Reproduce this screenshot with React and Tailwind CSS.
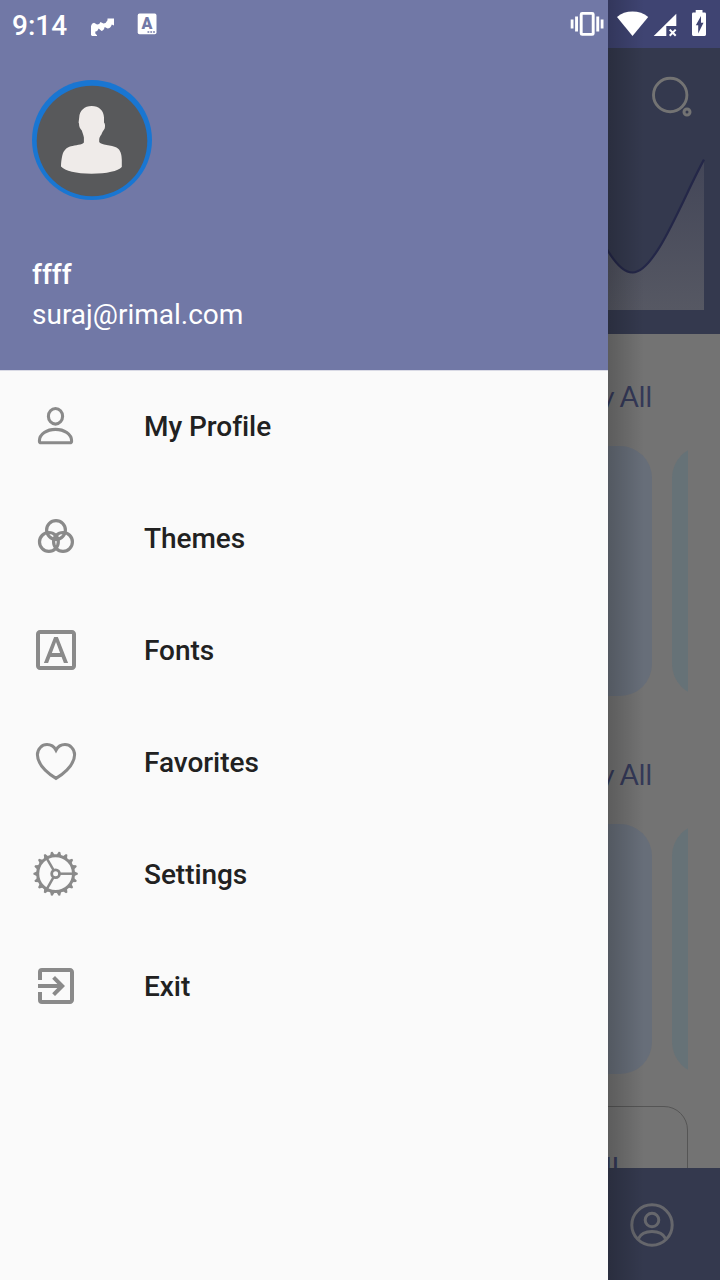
import React from "react";
import { MdOutlineFontDownload, MdExitToApp } from "react-icons/md";

const teeth = Array.from({ length: 18 }, (_, i) => i * 20);

function ProfileIcon() {
  return (
    <svg className="size-12" viewBox="0 0 48 48" fill="none" stroke="currentColor" strokeWidth="3.1">
      <ellipse cx="23.5" cy="14.3" rx="7.1" ry="7.8" />
      <path d="M7.4 39C7.4 32 15 27.4 23.5 27.4S39.6 32 39.6 39Q39.6 40.8 37.8 40.8H9.2Q7.4 40.8 7.4 39Z" />
    </svg>
  );
}

function ThemesIcon() {
  return (
    <svg className="size-12" viewBox="0 0 48 48" fill="none" stroke="currentColor" strokeWidth="3.2">
      <circle cx="24" cy="16" r="9.4" />
      <circle cx="16.9" cy="27.9" r="9.4" />
      <circle cx="31" cy="27.9" r="9.4" />
    </svg>
  );
}

function HeartIcon() {
  return (
    <svg className="size-12" viewBox="0 0 48 48" fill="none" stroke="currentColor" strokeWidth="3">
      <path d="M24 40.4C20 38 5.4 28.5 5.4 16.8C5.4 10.8 10 6.6 15 6.6C19.4 6.6 22.3 9 24 12.2C25.7 9 28.6 6.6 33 6.6C38 6.6 42.6 10.8 42.6 16.8C42.6 28.5 28 38 24 40.4Z" />
    </svg>
  );
}

function GearIcon() {
  return (
    <svg className="size-12" viewBox="0 0 48 48" fill="none" stroke="currentColor">
      <circle cx="23.6" cy="23.7" r="17.9" strokeWidth="3" />
      <circle cx="23.6" cy="23.7" r="3.9" strokeWidth="2.8" />
      {[0, 120, 240].map((a) => (
        <path key={a} d="M27.6 23.7H41" strokeWidth="2.5" transform={`rotate(${a} 23.6 23.7)`} />
      ))}
      {teeth.map((a) => (
        <path key={a} d="M42 21.2L45.8 22.9L45.8 24.5L42 26.2Z" fill="currentColor" stroke="none" transform={`rotate(${a} 23.6 23.7)`} />
      ))}
    </svg>
  );
}

const items = [
  ["My Profile", <ProfileIcon />],
  ["Themes", <ThemesIcon />],
  ["Fonts", <MdOutlineFontDownload className="size-12" />],
  ["Favorites", <HeartIcon />],
  ["Settings", <GearIcon />],
  ["Exit", <MdExitToApp className="size-12" />],
];

function Avatar() {
  return (
    <svg className="size-[120px]" viewBox="0 0 120 120">
      <circle cx="60" cy="60" r="60" fill="#1976d2" />
      <circle cx="60" cy="61" r="55.3" fill="#58595b" />
      <path
        fill="#efebe9"
        d="M59.7 26C67 26 71.8 30.5 72 37.5V42.5C73.4 44 73.2 47 72.6 48.8C71.5 50.3 70.3 52 69.4 54.5C68.4 56 67.3 57 67.2 59.5V62C68.5 65 80 65 84.5 67.5C88.5 69.5 89.8 74.5 89.8 80V87C86 91 75 93.7 59.5 93.7C44 93.7 33 91 29 86.5C29 83 29.5 79 30.3 75.5C31.5 70.5 34.5 67.5 39 66.3C43 65.2 50.5 64.8 51.9 62.5V57.5C51.5 55 50.5 53 49.8 50.5C48 48.5 47 47 47 43.5L46.6 42.5L47.2 37.5C47.5 30.5 52.5 26 59.7 26Z"
      />
    </svg>
  );
}

function StatusBar() {
  return (
    <div className="absolute inset-x-0 top-0 flex h-12 items-center justify-between text-white">
      <div className="flex items-center pl-3">
        <span className="w-[78px] pt-[3px] text-[28px] leading-none font-medium">9:14</span>
        <svg className="h-12 w-[26px]" viewBox="90 0 26 48" fill="currentColor">
          <path d="M91 35V26Q91.6 23 94 22.8L97 24.5Q99.5 24.6 100.5 22L103.5 23.6Q106 23.4 107.5 20.2V18.4H114V25.4L111.8 24.6Q110.6 28.4 107.6 28.6L104.7 27Q104 30.4 101.5 30.9L98.7 28.6Q97.6 31.6 95.3 31.4V33.4L97 35.3V36H92Z" />
        </svg>
        <svg className="ml-5 h-12 w-6" viewBox="136 0 24 48">
          <rect x="137.7" y="13.6" width="18.8" height="20.6" rx="1.8" fill="#fff" />
          <text x="147" y="29" fontSize="16" fontWeight="900" textAnchor="middle" fill="#7178a6">A</text>
          <path d="M147.5 32H155" stroke="#7178a6" strokeWidth="1.7" strokeDasharray="1.8 1" />
        </svg>
      </div>
      <svg className="h-12 w-[152px]" viewBox="568 0 152 48" fill="currentColor">
        <rect x="581.2" y="13.4" width="12" height="21" rx="1" fill="none" stroke="currentColor" strokeWidth="2.9" />
        <path d="M570.7 19.5H573.5V28.6H570.7ZM575.1 16.6H578V31.4H575.1ZM596.3 16.6H599.2V31.4H596.3ZM600.7 19.5H603.5V28.6H600.7Z" />
        <path d="M632.5 36L617 17Q623.5 11.6 632.5 11.6T648.2 17Z" />
        <path d="M653.7 36L676.3 13.7V26H666.3V36Z" />
        <path d="M669.7 29.6L675.7 35.8M675.7 29.6L669.7 35.8" stroke="currentColor" strokeWidth="2" />
        <path fillRule="evenodd" d="M695.7 10H702.5V12.6H704.7Q706 12.6 706 14V34.6Q706 36 704.7 36H693.3Q692 36 692 34.6V14Q692 12.6 693.3 12.6H695.7ZM701 16L695.8 25.3H698.2V33.5L703.5 22.8H701Z" />
      </svg>
    </div>
  );
}

function Section() {
  return (
    <section className="flex flex-col pr-8">
      <div className="flex h-[112px] items-center justify-end pt-3 pr-9 text-[28px] text-[#343958] [font-family:Lato,sans-serif]">
        y All
      </div>
      <div className="flex h-[250px] justify-end gap-5 overflow-hidden">
        <div className="w-[250px] shrink-0 rounded-[32px] bg-[#676e79]" />
        <div className="w-4 shrink-0 overflow-hidden">
          <div className="h-full w-[250px] rounded-[32px] bg-[#667277]" />
        </div>
      </div>
    </section>
  );
}

function HomePage() {
  return (
    <div className="flex h-full flex-col bg-[#737373]">
      <div className="h-12 shrink-0 bg-[#3f4472]" />
      <header className="h-[286px] shrink-0 bg-[#34394e]">
        <div className="flex h-[110px] justify-end pt-6 pr-6">
          <svg className="size-12" viewBox="648 72 48 48" fill="none" stroke="#737373">
            <circle cx="670.2" cy="95" r="16.7" strokeWidth="2.9" />
            <circle cx="687" cy="112" r="3" strokeWidth="3" />
          </svg>
        </div>
        <svg className="h-[152px] w-full" viewBox="0 158 720 152" fill="none">
          <defs>
            <linearGradient id="area" x1="0" y1="159" x2="0" y2="310" gradientUnits="userSpaceOnUse">
              <stop stopColor="#434658" />
              <stop offset="1" stopColor="#565863" />
            </linearGradient>
          </defs>
          <path d="M580 196C598 232 614 272.5 632.5 272.5C656 272.5 684 195 704 159V310H580Z" fill="url(#area)" />
          <path d="M580 196C598 232 614 272.5 632.5 272.5C656 272.5 684 195 704 159.6" stroke="#242748" strokeWidth="2.2" />
        </svg>
      </header>
      <main className="flex min-h-0 flex-1 flex-col gap-4 overflow-hidden">
        <Section />
        <Section />
        <div className="mt-4 mr-8 h-40 shrink-0 rounded-[24px] border border-[#555] pt-[42px] pr-[68px] text-right text-[30px] leading-10 text-[#343958]">
          ll
        </div>
      </main>
      <nav className="flex h-28 shrink-0 items-center justify-end bg-[#34394e] pt-[2px] pr-11">
        <svg className="size-12" viewBox="0 0 48 48" fill="none" stroke="#66676c" strokeWidth="3">
          <circle cx="24" cy="24" r="20.2" />
          <circle cx="24" cy="19" r="6.8" />
          <path d="M10.5 37.5C15 28.3 33 28.3 37.5 37.5" />
        </svg>
      </nav>
    </div>
  );
}

function Drawer() {
  return (
    <div className="absolute inset-y-0 left-0 flex">
      <aside className="flex w-[608px] flex-col bg-[#fafafa]">
        <div className="flex h-[371px] flex-col border-b border-[#d9dae5] bg-[#7178a6] px-8 pt-20 text-[28px] text-white">
          <Avatar />
          <div className="mt-[55px] leading-10 font-medium">ffff</div>
          <div className="leading-10">suraj@rimal.com</div>
        </div>
        <ul className="-mt-px flex flex-col">
          {items.map(([label, icon]) => (
            <li key={label} className="flex h-28 items-center gap-16 px-8">
              <span className="text-[#8a8a8a]">{icon}</span>
              <span className="pt-0.5 text-[28px] font-medium tracking-[-0.05px] text-[#212121]">{label}</span>
            </li>
          ))}
        </ul>
      </aside>
      <div className="w-9 bg-linear-to-r from-black/20 to-transparent" />
    </div>
  );
}

export default function App() {
  return (
    <div className="relative h-[1280px] w-[720px] overflow-hidden [font-family:Roboto,sans-serif]">
      <HomePage />
      <Drawer />
      <StatusBar />
    </div>
  );
}
